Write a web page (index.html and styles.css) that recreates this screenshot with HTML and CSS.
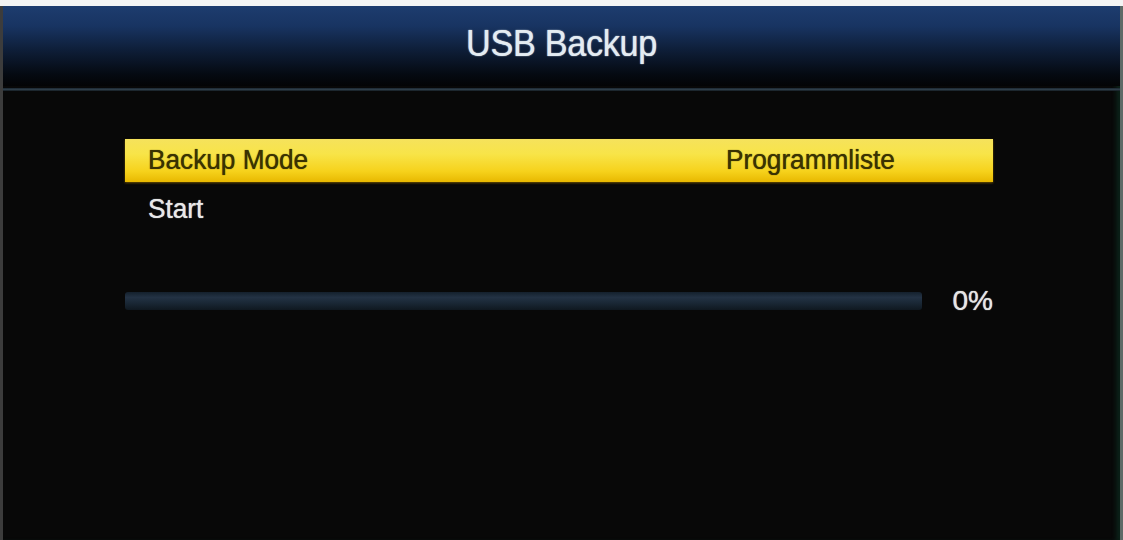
FILE: index.html
```html
<!DOCTYPE html>
<html>
<head>
<meta charset="utf-8">
<link rel="stylesheet" href="styles.css">
</head>
<body>
<div class="screen">
  <header class="header"><h1 class="title">USB Backup</h1></header>
  <div class="divider"></div>
  <main class="content">
    <div class="menu">
      <div class="row row-active"><span class="label">Backup Mode</span><span class="value">Programmliste</span></div>
      <div class="row row-plain"><span class="label">Start</span></div>
    </div>
    <div class="progress">
      <div class="track"><div class="fill" style="width:0%"></div></div>
      <span class="percent">0%</span>
    </div>
  </main>
</div>
</body>
</html>
```
FILE: styles.css
```css
html, body {
  margin: 0;
  padding: 0;
  background: #f4f4f4;
}
body {
  width: 1123px;
  height: 540px;
  overflow: hidden;
  font-family: "Liberation Sans", Arial, sans-serif;
}
.screen {
  margin-top: 6px;
  height: 534px;
  background: #080808;
  border-left: 3px solid #3c3c3c;
  border-right: 3px solid #5e6a66;
  box-shadow: inset -6px 0 4px -2px #0b2018;
  display: flex;
  flex-direction: column;
}
.header {
  height: 80px;
  background: linear-gradient(to bottom, #1d3c6e 0%, #183462 25%, #0e1e38 55%, #050a12 85%, #030405 100%);
  display: flex;
  justify-content: center;
  align-items: flex-start;
}
.title {
  margin: 0;
  margin-top: 18px;
  font-weight: normal;
  font-size: 36px;
  line-height: 40px;
  color: #e4ecf2;
  transform: scale(0.95, 1.03);
  letter-spacing: -0.3px;
  text-shadow: 0 0 1px #c8d4de, 0 0 2px rgba(200, 215, 230, 0.4);
}
.divider {
  height: 3px;
  margin-top: 2px;
  background: linear-gradient(to bottom, #1a2630, #2e3d48, #141c22);
}
.content {
  padding: 48px 127px 0 122px;
  display: flex;
  flex-direction: column;
}
.menu {
  display: flex;
  flex-direction: column;
}
.row {
  height: 43px;
  display: flex;
  align-items: center;
  font-size: 27px;
  color: #e8e8e8;
  padding-left: 23px;
  text-shadow: 0 0 1px currentColor;
}
.row-plain {
  padding-top: 6px;
}
.row-active {
  background: linear-gradient(to bottom, #f5e25c 0%, #f8e448 35%, #f6d21c 75%, #e8b800 100%);
  color: #3a3202;
  box-shadow: 0 1px 2px #6a5000;
}
.label {
  flex: 1;
  transform-origin: left center;
  transform: scaleX(0.97);
}
.value {
  width: 365px;
  text-align: center;
  transform: scaleX(0.97);
}
.progress {
  margin-top: 54px;
  display: flex;
  align-items: center;
  gap: 31px;
}
.track {
  width: 797px;
  height: 18px;
  border-radius: 3px;
  background: linear-gradient(to bottom, #14202c 0%, #233244 30%, #1a2836 60%, #0f1820 100%);
}
.fill {
  height: 100%;
  background: #3a6ea8;
}
.percent {
  font-size: 28px;
  color: #e6e6e6;
  text-shadow: 0 0 1px currentColor;
}
```
